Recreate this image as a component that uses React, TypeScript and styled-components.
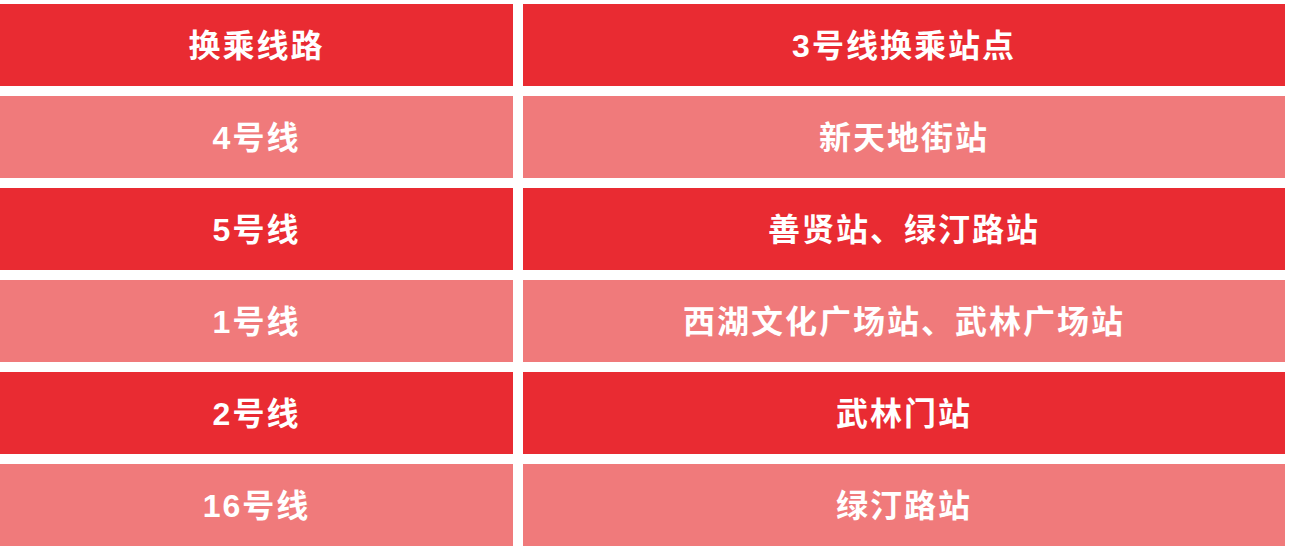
import React from "react";
import styled, { createGlobalStyle } from "styled-components";

const GlobalStyle = createGlobalStyle`
  html, body {
    margin: 0;
    padding: 0;
    background: #ffffff;
  }
`;

const Table = styled.div`
  display: grid;
  grid-template-columns: 513px 762px;
  grid-auto-rows: 82px;
  column-gap: 10px;
  row-gap: 10px;
  padding-top: 4px;
  width: 1285px;
`;

const Cell = styled.div<{ $strong: boolean }>`
  display: flex;
  align-items: center;
  justify-content: center;
  background: ${(p) => (p.$strong ? "#e92b32" : "#f07a7b")};
  color: #ffffff;
  font-family: "Liberation Sans", "Noto Sans CJK SC", sans-serif;
  font-weight: 700;
  font-size: 32px;
  letter-spacing: 2px;
  padding-bottom: 4px;
  box-sizing: border-box;
`;

const rows: [string, string][] = [
  ["换乘线路", "3号线换乘站点"],
  ["4号线", "新天地街站"],
  ["5号线", "善贤站、绿汀路站"],
  ["1号线", "西湖文化广场站、武林广场站"],
  ["2号线", "武林门站"],
  ["16号线", "绿汀路站"],
];

export default function App() {
  return (
    <>
      <GlobalStyle />
      <Table>
        {rows.map(([a, b], i) => (
          <React.Fragment key={i}>
            <Cell $strong={i % 2 === 0}>{a}</Cell>
            <Cell $strong={i % 2 === 0}>{b}</Cell>
          </React.Fragment>
        ))}
      </Table>
    </>
  );
}
